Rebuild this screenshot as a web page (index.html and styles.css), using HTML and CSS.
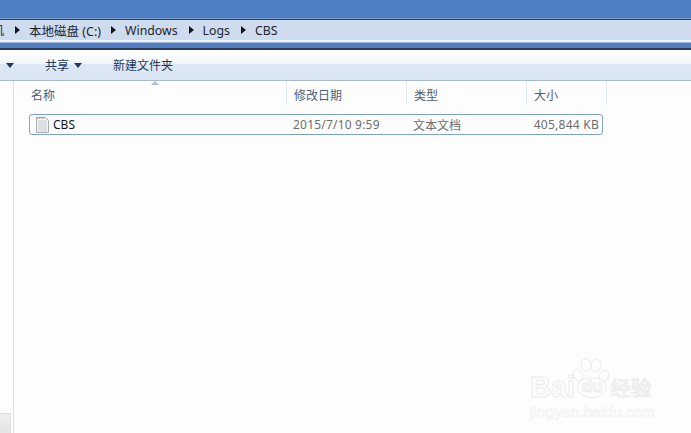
FILE: index.html
```html
<!DOCTYPE html>
<html lang="zh-CN">
<head>
<meta charset="utf-8">
<title>CBS</title>
<link rel="stylesheet" href="styles.css">
</head>
<body>
<div class="window">
  <div class="titlebar"></div>
  <div class="address">
    <span class="cut">机</span>
    <span class="arrow first"></span>
    <span class="crumb disk">本地磁盘 (C:)</span>
    <span class="arrow"></span>
    <span class="crumb">Windows</span>
    <span class="arrow"></span>
    <span class="crumb">Logs</span>
    <span class="arrow"></span>
    <span class="crumb">CBS</span>
  </div>
  <div class="band"></div>
  <div class="toolbar">
    <span class="tool-arrow lead"></span>
    <span class="tool">共享</span>
    <span class="tool-arrow"></span>
    <span class="tool new">新建文件夹</span>
  </div>
  <div class="main">
    <aside class="nav"><div class="nav-thumb"></div></aside>
    <section class="content">
      <div class="head">
        <div class="hcell c-name">名称<span class="sort"></span></div>
        <div class="hcell c-date">修改日期</div>
        <div class="hcell c-type">类型</div>
        <div class="hcell c-size">大小</div>
      </div>
      <div class="row">
        <div class="cell r-name">
          <svg class="file" width="15" height="18" viewBox="0 0 15 18">
            <path d="M1.5 1.5h9l3 3v12h-12z" fill="#f6f7f8" stroke="#a9adb3"/>
            <path d="M1.5 1.5l1 1 1-1 1 1 1-1 1 1 1-1 1 1 1-1" fill="none" stroke="#8d9197"/>
            <path d="M3 5h9M3 7h9M3 9h9M3 11h9M3 13h9M3 15h9" stroke="#c3c8cf"/>
          </svg>
          <span>CBS</span>
        </div>
        <div class="cell r-date">2015/7/10 9:59</div>
        <div class="cell r-type">文本文档</div>
        <div class="cell r-size">405,844 KB</div>
      </div>
    </section>
  </div>
</div>
<div class="mark">
  <svg class="paw" width="38" height="26" viewBox="0 0 38 26">
    <g fill="#fdfdfd" stroke="#eeeeee" stroke-width="1.2">
      <ellipse cx="6" cy="17" rx="4.5" ry="6" transform="rotate(-20 6 17)"/>
      <ellipse cx="14" cy="7" rx="4.8" ry="6.5" transform="rotate(-8 14 7)"/>
      <ellipse cx="24" cy="7.5" rx="4.8" ry="6.5" transform="rotate(8 24 7.5)"/>
      <ellipse cx="32" cy="18" rx="4.5" ry="6" transform="rotate(25 32 18)"/>
    </g>
  </svg>
  <div class="mark-word"><span>Bai</span><span class="du">du</span><span class="jy">经验</span></div>
  <div class="mark-url">jingyan.baidu.com</div>
</div>
</body>
</html>
```
FILE: styles.css
```css
* { box-sizing: border-box; }
html, body { margin: 0; height: 100%; overflow: hidden; }
body { font-family: "Noto Sans", "Noto Sans CJK SC", sans-serif; font-size: 12px; background: #fdfdfd; }
.window { display: flex; flex-direction: column; height: 433px; }
.titlebar { flex: none; height: 19px; background: #4f7ec2; border-bottom: 1px solid #7fa2d6; }
.address {
  flex: none; height: 23px; display: flex; align-items: center;
  background: #cfdcee; border-top: 1px solid #2f3d55; border-bottom: 2px solid #eef2f8;
  color: #1d2430; font-size: 12.3px; overflow: hidden;
}
.cut { flex: none; margin-left: -8px; margin-right: 11px; font-size: 12px; }
.arrow { flex: none; width: 0; height: 0; border-left: 5px solid #10151c; border-top: 4px solid transparent; border-bottom: 4px solid transparent; margin: 0 9px 0 11px; }
.arrow.first { margin-left: 0; margin-right: 9px; }
.crumb { white-space: nowrap; }
.crumb.disk { font-size: 12.5px; margin-right: -1px; }
.band { flex: none; height: 8px; background: #4f7ec2; border-top: 1px solid #9fb8dc; border-bottom: 2px solid #2b3a55; }
.toolbar {
  flex: none; height: 31px; display: flex; align-items: center;
  background: linear-gradient(#ffffff 0, #f2f7fd 45%, #dde7f5 46%, #dae5f4 95%);
  border-bottom: 1px solid #a9bad2; color: #1e395b; font-size: 12px;
}
.tool-arrow { width: 0; height: 0; border-top: 5px solid #1e395b; border-left: 4px solid transparent; border-right: 4px solid transparent; margin-left: 5px; }
.tool-arrow.lead { margin-left: 6px; margin-right: 31px; }
.tool { white-space: nowrap; }
.tool.new { margin-left: 31px; }
.main { flex: 1; display: flex; min-height: 0; }
.nav { flex: none; width: 14px; border-right: 1px solid #d6e2ef; background: #fdfdfd; display: flex; align-items: flex-end; }
.nav-thumb { width: 11px; height: 20px; background: linear-gradient(#efefef, #e4e4e4); border: 1px solid #dcdcdc; border-left: 0; border-bottom: 0; border-radius: 0 2px 0 0; }
.content { flex: 1; min-width: 0; padding-left: 15px; }
.head { display: flex; height: 24px; color: #4c607a; }
.hcell { position: relative; padding: 5px 0 0 7px; border-right: 1px solid #e4ebf4; }
.c-name { width: 258px; padding-left: 2px; }
.c-date, .c-type { width: 120px; }
.c-size { width: 80px; }
.sort { position: absolute; top: 0; left: 122px; width: 0; height: 0; border-bottom: 4px solid #a8c0dc; border-left: 4px solid transparent; border-right: 4px solid transparent; }
.row {
  display: flex; align-items: center; width: 574px; height: 21px; margin-top: 9px;
  border: 1px solid #7da2ce; border-radius: 3px; background: #fdfdfe; color: #6d6d6d;
}
.cell { white-space: nowrap; }
.r-name { width: 263px; display: flex; align-items: center; gap: 3px; padding-left: 5px; color: #10151c; }
.file { flex: none; }
.r-date { width: 120px; letter-spacing: 0.2px; }
.r-type { width: 114px; }
.r-size { width: 72px; text-align: right; letter-spacing: 0.25px; }
.mark { position: absolute; left: 530px; top: 358px; width: 130px; padding-top: 18px; color: #fdfdfd; }
.paw { position: absolute; left: 42px; top: 0; }
.mark-word { font-size: 29px; font-family: "Liberation Sans", sans-serif; font-weight: bold; line-height: 22px; height: 22px; display: flex; align-items: center; -webkit-text-stroke: 1px #ececec; }
.du { width: 30px; height: 21px; margin-left: 2px; border: 1px solid #eeeeee; border-radius: 50%; font-size: 17px; line-height: 18px; text-align: center; position: relative; background: #fdfdfd; }
.jy { font-size: 20.5px; margin-left: 3px; font-family: "Noto Sans CJK SC", sans-serif; font-weight: normal; }
.mark-url { margin-top: 5px; font-family: "Liberation Sans", sans-serif; font-size: 15.5px; line-height: 17px; -webkit-text-stroke: 0.6px #f0f0f0; }
```
